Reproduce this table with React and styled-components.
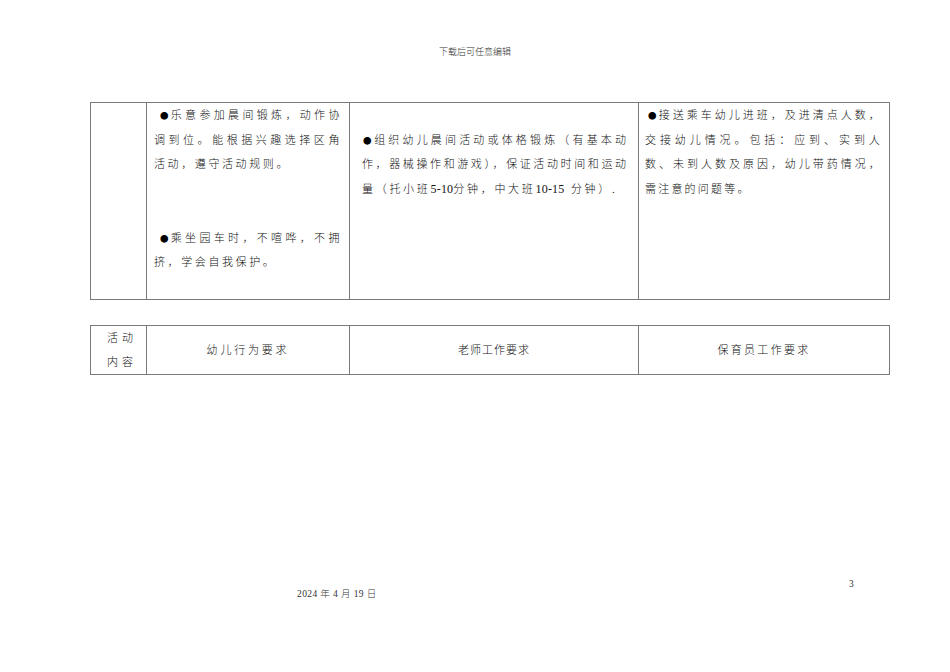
import React from "react";
import styled, { createGlobalStyle } from "styled-components";

const GlobalStyle = createGlobalStyle`
  html, body {
    margin: 0;
    padding: 0;
    background: #ffffff;
  }
  body {
    font-family: "Liberation Serif", "Noto Sans CJK SC", serif;
    font-weight: 300;
    color: #111;
  }
  * {
    box-sizing: border-box;
  }
`;

const Page = styled.div`
  width: 950px;
  min-height: 672px;
  display: flex;
  flex-direction: column;
  background: #fff;
`;

const TopNote = styled.div`
  margin-top: 46px;
  text-align: center;
  font-size: 9px;
  line-height: 12px;
  color: #333;
`;

const Table = styled.div`
  display: grid;
  grid-template-columns: 56px 203px 289px 251px;
  grid-auto-rows: ${(p) => p.$rowHeight}px;
  margin-left: 90px;
  margin-top: ${(p) => p.$top}px;
  width: 800px;
  border-left: 1px solid #7a7a7a;
  border-top: 1px solid #7a7a7a;
`;

const Cell = styled.div`
  border-right: 1px solid #7a7a7a;
  border-bottom: 1px solid #7a7a7a;
  padding: 0 ${(p) => p.$pr || 0}px 0 ${(p) => p.$pl || 0}px;
  font-size: 11px;
  line-height: 24.5px;
  letter-spacing: ${(p) => p.$ls || 0}px;
`;

const Line = styled.div`
  text-align: ${(p) => (p.$justify ? "justify" : "left")};
  text-align-last: ${(p) => (p.$justify ? "justify" : "auto")};
  padding-left: ${(p) => p.$indent || 0}px;
  ${(p) => (p.$ls ? `letter-spacing: ${p.$ls}px;` : "")}
`;

const Bullet = styled.span`
  font-family: "Noto Sans CJK SC", sans-serif;
  font-weight: 400;
  font-size: 8.5px;
  letter-spacing: 1.5px;
  color: #000;
`;

const Blank = styled.div`
  height: 24.5px;
`;

const Num = styled.span`
  font-size: 12px;
  letter-spacing: 0.2px;
`;

const HeadCell = styled.div`
  border-right: 1px solid #7a7a7a;
  border-bottom: 1px solid #7a7a7a;
  display: flex;
  flex-direction: column;
  justify-content: center;
  align-items: ${(p) => (p.$left ? "flex-start" : "center")};
  padding-left: ${(p) => p.$pl || 0}px;
  font-size: 11px;
  line-height: 24px;
  letter-spacing: ${(p) => p.$ls || 0}px;
`;

const PageNum = styled.div`
  margin-top: 203px;
  padding-left: 849px;
  font-size: 9.5px;
  line-height: 12px;
  color: #333;
`;

const DateLine = styled.div`
  margin-top: -2px;
  padding-left: 297px;
  font-size: 9.5px;
  line-height: 12px;
  letter-spacing: 0.4px;
  color: #333;
`;

export default function App() {
  return (
    <Page>
      <GlobalStyle />
      <TopNote>下载后可任意编辑</TopNote>

      <Table $top={44} $rowHeight={197}>
        <Cell />
        <Cell $pl={7} $pr={7} $ls={2.6}>
          <Line $justify $indent={6}><Bullet>●</Bullet>乐意参加晨间锻炼，动作协</Line>
          <Line $justify>调到位。能根据兴趣选择区角</Line>
          <Line>活动，遵守活动规则。</Line>
          <Blank />
          <Blank />
          <Line $justify $indent={6}><Bullet>●</Bullet>乘坐园车时，不喧哗，不拥</Line>
          <Line>挤，学会自我保护。</Line>
        </Cell>
        <Cell $pl={12} $pr={10} $ls={2}>
          <Blank />
          <Line $justify $indent={1}><Bullet>●</Bullet>组织幼儿晨间活动或体格锻炼（有基本动</Line>
          <Line $justify>作，器械操作和游戏），保证活动时间和运动</Line>
          <Line $ls={2.7}>
            量（托小班<Num>5-10</Num>分钟，中大班<Num>10-15&nbsp;&nbsp;</Num>分钟）.
          </Line>
        </Cell>
        <Cell $pl={6} $pr={7} $ls={2.2}>
          <Line $justify $indent={3}><Bullet>●</Bullet>接送乘车幼儿进班，及进清点人数，</Line>
          <Line $justify>交接幼儿情况。包括：应到、实到人</Line>
          <Line $justify>数、未到人数及原因，幼儿带药情况，</Line>
          <Line>需注意的问题等。</Line>
        </Cell>
      </Table>

      <Table $top={25} $rowHeight={49}>
        <HeadCell $left $pl={16} $ls={4}>
          <span>活动</span>
          <span>内容</span>
        </HeadCell>
        <HeadCell $ls={2.8}>幼儿行为要求</HeadCell>
        <HeadCell $ls={1}>老师工作要求</HeadCell>
        <HeadCell $ls={2.3}>保育员工作要求</HeadCell>
      </Table>

      <PageNum>3</PageNum>
      <DateLine>2024 年 4 月 19 日</DateLine>
    </Page>
  );
}
